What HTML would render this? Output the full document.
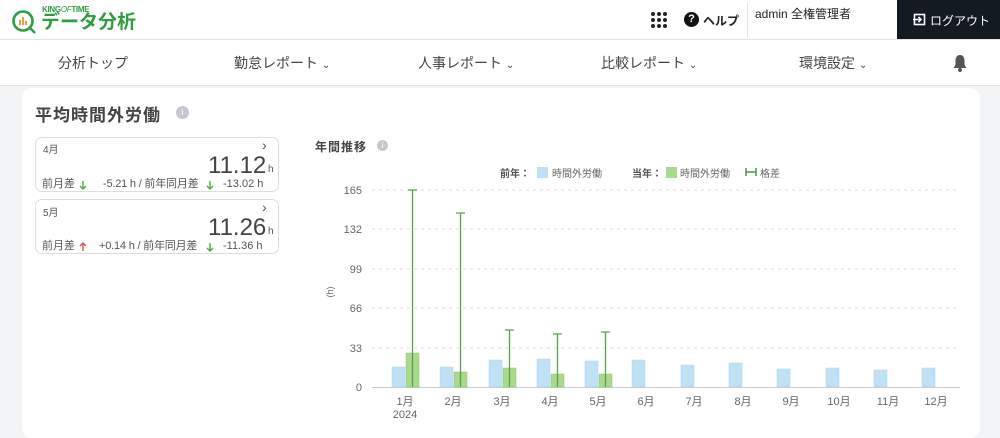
<!DOCTYPE html>
<html><head><meta charset="utf-8"><style>
*{margin:0;padding:0;box-sizing:border-box}
body{width:1000px;height:433px;overflow:hidden;background:#f3f4f6;font-family:"Liberation Sans","Noto Sans CJK JP",sans-serif;color:#333;position:relative}
.hdr{position:absolute;left:0;top:0;width:1000px;height:40px;background:#fff;border-bottom:1px solid #e4e4e4}
.nav{position:absolute;left:0;top:40px;width:1000px;height:46px;background:#fff;border-bottom:1px solid #e2e2e2}
.nav span{position:absolute;top:13px;font-size:14px;color:#444}
.card{position:absolute;left:22px;top:88px;width:958px;height:350px;background:#fff;border-radius:10px}
.t{position:absolute;white-space:nowrap}
.s{position:absolute;white-space:nowrap;font-size:11px;line-height:13px;height:13px;color:#555}
.box{position:absolute;left:35px;width:244px;height:55px;border:1px solid #ddd;border-radius:7px}
</style></head><body>
<div class="hdr">
 <svg class="t" style="left:11px;top:9px" width="26" height="26" viewBox="0 0 26 26"><circle cx="12" cy="12" r="9.5" fill="none" stroke="#2e9e3e" stroke-width="2.6"/><line x1="19" y1="19" x2="24" y2="24" stroke="#2e9e3e" stroke-width="2.6"/><rect x="8" y="11" width="2" height="5" fill="#e3a23a"/><rect x="11" y="8" width="2" height="8" fill="#e3a23a"/><rect x="14" y="12" width="2" height="4" fill="#e3a23a"/></svg>
 <div class="t" style="left:42px;top:5px;font-size:8px;font-weight:bold;color:#2e9e3e;letter-spacing:-0.3px">KING<i style="font-weight:normal">OF</i>TIME</div>
 <div class="t" style="left:41px;top:12px;font-size:19px;font-weight:bold;color:#2e9e3e;line-height:22px">データ分析</div>
 <svg class="t" style="left:650px;top:11px" width="18" height="18"><g fill="#222"><circle cx="3" cy="3" r="2"/><circle cx="9" cy="3" r="2"/><circle cx="15" cy="3" r="2"/><circle cx="3" cy="9" r="2"/><circle cx="9" cy="9" r="2"/><circle cx="15" cy="9" r="2"/><circle cx="3" cy="15" r="2"/><circle cx="9" cy="15" r="2"/><circle cx="15" cy="15" r="2"/></g></svg>
 <div class="t" style="left:684px;top:12px;width:15px;height:15px;border-radius:50%;background:#111;color:#fff;font-size:11px;font-weight:bold;text-align:center;line-height:15px">?</div>
 <div class="t" style="left:703px;top:12px;font-size:12px;font-weight:bold;color:#222">ヘルプ</div>
 <div class="t" style="left:747px;top:3px;width:1px;height:34px;background:#e4e4e4"></div>
 <div class="t" style="left:755px;top:5px;font-size:12px;color:#222">admin 全権管理者</div>
 <div class="t" style="left:897px;top:0;width:103px;height:39px;background:#141a22"></div>
 <svg class="t" style="left:913px;top:13px" width="13" height="13"><rect x="1.5" y="1.5" width="10" height="10" fill="none" stroke="#fff" stroke-width="1.6"/><path d="M0 6.5H8M5.5 4L8 6.5L5.5 9" stroke="#fff" stroke-width="1.6" fill="none"/></svg>
 <div class="t" style="left:930px;top:12px;font-size:12px;color:#fff">ログアウト</div>
</div>
<div class="nav">
 <span style="left:58px">分析トップ</span>
 <span style="left:234px">勤怠レポート <small style="font-size:10px">⌄</small></span>
 <span style="left:418px">人事レポート <small style="font-size:10px">⌄</small></span>
 <span style="left:601px">比較レポート <small style="font-size:10px">⌄</small></span>
 <span style="left:799px">環境設定 <small style="font-size:10px">⌄</small></span>
 <svg class="t" style="left:952px;top:14px" width="16" height="18"><path d="M8 1C4.5 1 3.5 4 3.5 7V11L1.5 14H14.5L12.5 11V7C12.5 4 11.5 1 8 1Z" fill="#555"/><circle cx="8" cy="16" r="2" fill="#555"/></svg>
</div>
<div class="card"></div>
<div class="t" style="left:35px;top:101px;font-size:17px;font-weight:bold;color:#444;letter-spacing:1px">平均時間外労働</div>
<div class="t" style="left:176px;top:106px;width:13px;height:13px;border-radius:50%;background:#c5c9cf;color:#fff;font-size:9px;text-align:center;line-height:13px">i</div>

<div class="box" style="top:137px"></div>
<div class="t" style="left:43px;top:141px;font-size:10px;color:#555">4月</div>
<div class="t" style="left:262px;top:137px;font-size:14px;color:#555">›</div>
<div class="t" style="left:208px;top:152px;font-size:24px;line-height:28px;color:#444">11.12</div>
<div class="t" style="left:268px;top:164px;font-size:10px;color:#555">h</div>
<div class="s" style="left:42px;top:178px">前月差</div>
<div class="s" style="left:103px;top:178px;letter-spacing:-0.2px">-5.21 h / 前年同月差</div>
<div class="s" style="left:223px;top:178px">-13.02 h</div>

<div class="box" style="top:199px"></div>
<div class="t" style="left:43px;top:204px;font-size:10px;color:#555">5月</div>
<div class="t" style="left:262px;top:199px;font-size:14px;color:#555">›</div>
<div class="t" style="left:208px;top:214px;font-size:24px;line-height:28px;color:#444">11.26</div>
<div class="t" style="left:268px;top:226px;font-size:10px;color:#555">h</div>
<div class="s" style="left:42px;top:240px">前月差</div>
<div class="s" style="left:99px;top:240px;letter-spacing:-0.2px">+0.14 h / 前年同月差</div>
<div class="s" style="left:223px;top:240px">-11.36 h</div>

<div class="t" style="left:315px;top:138px;font-size:12px;font-weight:bold;color:#444;letter-spacing:1px">年間推移</div>
<div class="t" style="left:377px;top:140px;width:11px;height:11px;border-radius:50%;background:#c5c9cf;color:#fff;font-size:8px;text-align:center;line-height:11px">i</div>

<svg class="t" style="left:0;top:0" width="1000" height="433" font-family="Liberation Sans, Noto Sans CJK JP, sans-serif">
 <g fill="none" stroke-width="1.4">
  <path d="M83 181V189M80 186L83 189L86 186" stroke="#5aa83a"/>
  <path d="M210 181V189M207 186L210 189L213 186" stroke="#5aa83a"/>
  <path d="M83 243V251M80 246L83 243L86 246" stroke="#d9534f"/>
  <path d="M210 243V251M207 248L210 251L213 248" stroke="#5aa83a"/>
 </g>
 <g font-size="10" fill="#555">
  <text x="500" y="177" font-weight="bold">前年：</text>
  <rect x="537" y="167" width="11" height="11" fill="#bfe1f6"/>
  <text x="552" y="177" fill="#666">時間外労働</text>
  <text x="632" y="177" font-weight="bold">当年：</text>
  <rect x="666" y="167" width="11" height="11" fill="#a9d98a"/>
  <text x="680" y="177" fill="#666">時間外労働</text>
  <path d="M746 168V176M746 172H756M756 168V176" stroke="#3e9a3e" stroke-width="1.5"/>
  <text x="760" y="177" fill="#666">格差</text>
 </g>
 <g stroke="#dcdcdc" stroke-dasharray="3,4">
  <line x1="372" y1="190" x2="960" y2="190"/><line x1="372" y1="229" x2="960" y2="229"/><line x1="372" y1="269" x2="960" y2="269"/><line x1="372" y1="308" x2="960" y2="308"/><line x1="372" y1="348" x2="960" y2="348"/>
 </g>
 <line x1="372" y1="387.5" x2="960" y2="387.5" stroke="#ccc"/>
 <g font-size="11" fill="#666" text-anchor="end">
  <text x="362" y="194">165</text><text x="362" y="233">132</text><text x="362" y="273">99</text><text x="362" y="312">66</text><text x="362" y="352">33</text><text x="362" y="391">0</text>
 </g>
 <text x="333" y="292" font-size="9" fill="#666" transform="rotate(-90 333 292)" text-anchor="middle">(h)</text>
 <g fill="#bfe1f6" stroke="#a9d3ef" stroke-width="0.5">
  <rect x="392" y="367" width="13" height="20"/><rect x="440" y="367" width="13" height="20"/><rect x="489" y="360" width="13" height="27"/><rect x="537" y="359" width="13" height="28"/><rect x="585" y="361" width="13" height="26"/><rect x="632" y="360" width="13" height="27"/><rect x="681" y="365" width="13" height="22"/><rect x="729" y="363" width="13" height="24"/><rect x="777" y="369" width="13" height="18"/><rect x="826" y="368" width="13" height="19"/><rect x="874" y="370" width="13" height="17"/><rect x="922" y="368" width="13" height="19"/>
 </g>
 <g fill="#a9d98a" stroke="#8cc870" stroke-width="0.5">
  <rect x="406" y="353" width="13" height="34"/><rect x="454" y="372" width="13" height="15"/><rect x="503" y="368" width="13" height="19"/><rect x="551" y="374" width="13" height="13"/><rect x="599" y="374" width="13" height="13"/>
 </g>
 <g stroke="#5a9e4e" stroke-width="1.3">
  <path d="M412.5 190V387M408 190H417"/><path d="M460.5 213V387M456 213H465"/><path d="M509.5 330V387M505 330H514"/><path d="M557.5 334V387M553 334H562"/><path d="M605.5 332V387M601 332H610"/>
 </g>
 <g font-size="11" fill="#666" text-anchor="middle">
  <text x="405" y="405">1月</text><text x="405" y="418">2024</text>
  <text x="453" y="405">2月</text><text x="502" y="405">3月</text><text x="550" y="405">4月</text><text x="598" y="405">5月</text><text x="646" y="405">6月</text><text x="694" y="405">7月</text><text x="743" y="405">8月</text><text x="791" y="405">9月</text><text x="839" y="405">10月</text><text x="888" y="405">11月</text><text x="936" y="405">12月</text>
 </g>
</svg>
</body></html>
